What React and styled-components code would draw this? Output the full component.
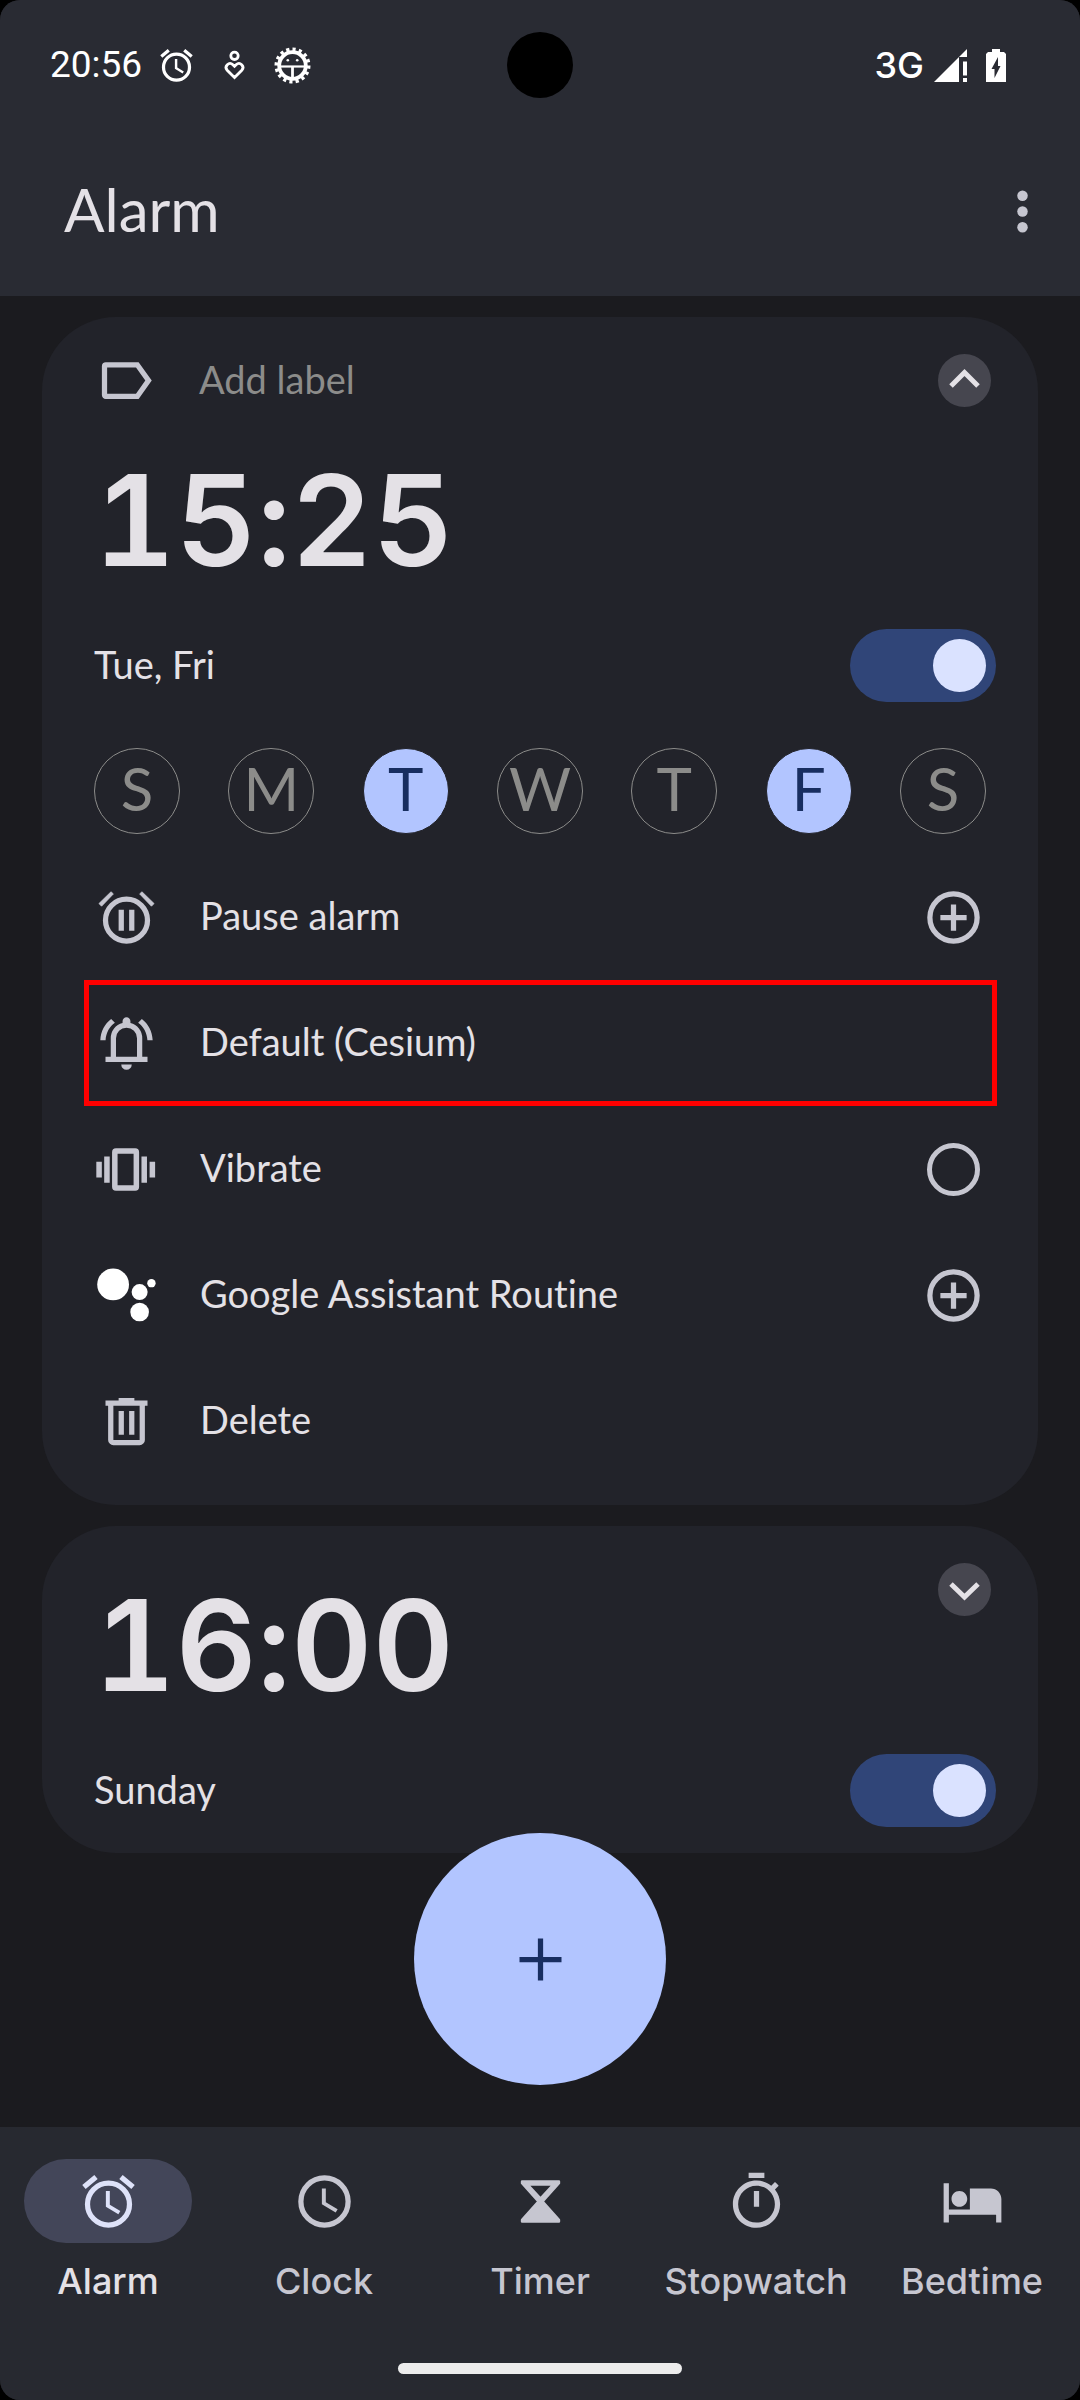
import React, { useState } from "react";
import styled, { createGlobalStyle } from "styled-components";

const color = {
  bar: "#292b33",
  nav: "#272930",
  page: "#1b1b1f",
  card: "#22232a",
  text: "#e4e1e6",
  muted: "#8c8c8a",
  icon: "#c6c6d0",
  primary: "#b2c5ff",
  onPrimary: "#182e60",
  track: "#304578",
  thumb: "#dae2ff",
  chip: "#46464f",
  pill: "#434659",
  pillIcon: "#dee2f9",
  highlight: "#ff0000",
};

const textFont = `Lato, "Open Sans", sans-serif`;
const uiFont = `Inter, Roboto, sans-serif`;

const GlobalStyle = createGlobalStyle`
  *, *::before { box-sizing: border-box; }
  body { margin: 0; background: #000; }
  button {
    margin: 0;
    padding: 0;
    border: 0;
    background: none;
    color: inherit;
    font: inherit;
    text-align: left;
    cursor: pointer;
  }
  svg { display: block; flex: none; }
`;

const Screen = styled.div`
  display: flex;
  flex-direction: column;
  min-height: 100vh;
  overflow: hidden;
  border-radius: 20px;
  background: ${color.page};
  color: ${color.text};
  font-family: ${textFont};
  font-size: 38px;
  line-height: 46px;
  font-variant-ligatures: none;
`;

const Header = styled.header`
  background: ${color.bar};
`;

const StatusBar = styled.div`
  display: grid;
  grid-template-columns: 1fr 66px 1fr;
  align-items: center;
  height: 130px;
  padding: 0 74px 0 50px;
  color: #fff;
`;

const StatusGroup = styled.div`
  display: flex;
  align-items: center;
  justify-content: ${(p) => (p.$end ? "flex-end" : "flex-start")};
  gap: ${(p) => p.$gap}px;
`;

const StatusTime = styled.span`
  font-family: Roboto, sans-serif;
  font-size: 37px;
`;

const Network = styled.span`
  font-family: ${uiFont};
  font-size: 36px;
  font-weight: 500;
`;

const Camera = styled.div`
  width: 66px;
  height: 66px;
  margin-left: 12px;
  border-radius: 50%;
  background: #000;
`;

const AppBar = styled.div`
  display: flex;
  align-items: center;
  justify-content: space-between;
  height: 166px;
  padding: 0 26px 4px 64px;
`;

const Title = styled.h1`
  margin: 0;
  padding-bottom: 4px;
  font-size: 60px;
  line-height: 70px;
  font-weight: 400;
`;

const MoreButton = styled.button`
  color: ${color.icon};
`;

const Body = styled.main`
  position: relative;
  flex: 1;
  display: flex;
  flex-direction: column;
  gap: 21px;
  padding: 21px 42px;
`;

const Card = styled.section`
  border-radius: 74px;
  background: ${color.card};
  padding-bottom: ${(p) => (p.$open ? 21 : 26)}px;
`;

const CardHead = styled.div`
  display: flex;
  align-items: flex-start;
  justify-content: space-between;
  padding: 37px 47px 0 52px;
`;

const AddLabel = styled.button`
  display: flex;
  align-items: center;
  gap: 42px;
  height: 53px;
  margin-bottom: 48px;
  color: ${color.icon};
  span {
    padding-bottom: 4px;
    color: ${color.muted};
  }
`;

const Expand = styled.button`
  width: 53px;
  height: 53px;
  border-radius: 50%;
  background: ${color.chip};
`;

const Time = styled.button`
  display: block;
  margin: ${(p) => (p.$inHead ? "17px 0 0" : "0 52px")};
  font-family: ${uiFont};
  font-size: 126px;
  line-height: 130px;
  font-weight: 600;
  font-variant-numeric: tabular-nums;
  font-feature-settings: "calt" 0;
`;

const Schedule = styled.label`
  display: flex;
  align-items: center;
  justify-content: space-between;
  margin: 44px 42px 0 52px;
  span { padding-bottom: 4px; }
`;

const Switch = styled.input.attrs({ type: "checkbox", role: "switch" })`
  appearance: none;
  display: flex;
  align-items: center;
  width: 146px;
  height: 73px;
  margin: 0;
  padding: 10px;
  border-radius: 37px;
  background: ${color.chip};
  &::before {
    content: "";
    width: 53px;
    height: 53px;
    border-radius: 50%;
    background: ${color.thumb};
  }
  &:checked { justify-content: flex-end; background: ${color.track}; }
`;

const Days = styled.div`
  display: flex;
  justify-content: space-between;
  margin: 46px 52px 20px;
`;

const Day = styled.button`
  width: 86px;
  height: 86px;
  padding-bottom: 6px;
  border-radius: 50%;
  border: 1px solid ${(p) => (p.$on ? color.card : color.muted)};
  background: ${(p) => (p.$on ? color.primary : "transparent")};
  color: ${(p) => (p.$on ? color.onPrimary : color.muted)};
  font-size: 60px;
  line-height: 78px;
  text-align: center;
`;

const Options = styled.div`
  padding: 0 41px 0 42px;
`;

const Option = styled.button`
  display: flex;
  align-items: center;
  gap: 42px;
  width: 100%;
  height: 126px;
  padding: 0 7px 0 6px;
  border: 5px solid ${(p) => (p.$marked ? color.highlight : "transparent")};
  color: ${color.icon};
  span {
    flex: 1;
    padding-bottom: 4px;
    color: ${color.text};
  }
`;

const Round = styled.input.attrs({ type: "checkbox" })`
  appearance: none;
  width: 53px;
  height: 53px;
  margin: 0 5px;
  border: 5px solid ${color.icon};
  border-radius: 50%;
  &:checked { background: ${color.primary}; }
`;

const Fab = styled.button`
  position: absolute;
  left: 50%;
  bottom: 42px;
  display: grid;
  place-items: center;
  width: 252px;
  height: 252px;
  margin-left: -126px;
  border-radius: 50%;
  background: ${color.primary};
  color: ${color.onPrimary};
`;

const Footer = styled.footer`
  padding: 32px 0 26px;
  background: ${color.nav};
`;

const Tabs = styled.nav`
  display: grid;
  grid-template-columns: repeat(5, 1fr);
`;

const Tab = styled.a`
  display: flex;
  flex-direction: column;
  align-items: center;
  gap: 15px;
  color: ${(p) => (p.$active ? color.text : color.icon)};
  font-family: ${uiFont};
  font-size: 36px;
  font-weight: 500;
  text-decoration: none;
`;

const Pill = styled.span`
  display: grid;
  place-items: center;
  width: 168px;
  height: 84px;
  border-radius: 42px;
  background: ${(p) => (p.$active ? color.pill : "transparent")};
  color: ${(p) => (p.$active ? color.pillIcon : color.icon)};
`;

const HomeBar = styled.div`
  width: 284px;
  height: 11px;
  margin: 59px auto 0;
  border-radius: 6px;
  background: #ececec;
`;

const Icon = ({ size = 63, children }) => (
  <svg width={size} height={size} viewBox="0 0 24 24" fill="currentColor" aria-hidden="true">
    {children}
  </svg>
);

const Ring = ({ cy = 12, r = 9 }) => (
  <circle cx="12" cy={cy} r={r} fill="none" stroke="currentColor" strokeWidth="2" />
);

const AlarmIcon = ({ size }) => (
  <Icon size={size}>
    <path d="M22 5.72l-4.6-3.86-1.29 1.53 4.6 3.86zM7.88 3.39L6.6 1.86 2 5.71l1.29 1.53z" />
    <Ring cy={13} r={8} />
    <path d="M12.5 8H11v6l4.75 2.85.75-1.23-4-2.37z" />
  </Icon>
);

const ClockIcon = () => (
  <Icon>
    <Ring />
    <path d="M12.5 7H11v6l5.25 3.15.75-1.23-4.5-2.67z" />
  </Icon>
);

const TimerIcon = () => (
  <Icon>
    <path
      fillRule="evenodd"
      stroke="currentColor"
      strokeLinejoin="round"
      d="M5 4.4h14v.6L12.7 12l6.3 7v.6H5V19l6.3-7L5 5zM7 5.500L12 10.900l5-5.400z"
    />
  </Icon>
);

const StopwatchIcon = () => (
  <Icon>
    <path d="M15 1H9v2h6V1zm-4 13h2V8h-2v6zm8.03-6.61l1.42-1.42c-.43-.51-.9-.99-1.41-1.41l-1.42 1.42C16.07 4.74 14.12 4 12 4c-4.97 0-9 4.03-9 9s4.02 9 9 9 9-4.03 9-9c0-2.12-.74-4.07-1.97-5.61zM12 20c-3.87 0-7-3.13-7-7s3.13-7 7-7 7 3.13 7 7-3.13 7-7 7z" />
  </Icon>
);

const BedIcon = () => (
  <Icon>
    <path d="M7 14c1.66 0 3-1.34 3-3S8.66 8 7 8s-3 1.34-3 3 1.34 3 3 3zm12-7h-8v8H3V5H1v15h2v-3h18v3h2v-9c0-2.21-1.79-4-4-4z" />
  </Icon>
);

const LabelIcon = () => (
  <Icon>
    <path
      fillRule="evenodd"
      d="M17 5H4.500C3.600 5 3 5.600 3 6.500v11c0 .9.6 1.500 1.500 1.500H17l5-7zM16 17H5V7h11l3.550 5z"
    />
  </Icon>
);

const PauseAlarmIcon = () => (
  <Icon>
    <path d="M6.1 2.2l.9.8-4.5 4.7-1-1zM17.9 2.2l-.9.8 4.5 4.7 1-1z" stroke="currentColor" strokeWidth=".3" />
    <Ring cy={13} r={8} />
    <path d="M9 9h2v8H9zM13 9h2v8h-2z" />
  </Icon>
);

const BellIcon = () => (
  <Icon>
    <path
      fillRule="evenodd"
      d="M4 19v-2h2v-7q0-2.075 1.25-3.687T10.5 4.2v-.7q0-.625.438-1.062T12 2t1.063.438T13.5 3.5v.7q2 .5 3.25 2.113T18 10v7h2v2zM8 17h8v-7q0-1.65-1.175-2.825T12 6T9.175 7.175T8 10z"
    />
    <path d="M10 20h4q0 .825-.587 1.413T12 22t-1.412-.587T10 20z" />
    <path d="M7.58 4.08L6.15 2.65C3.75 4.48 2.17 7.3 2.03 10.8h2c.15-2.95 1.51-5.27 3.55-6.72zM19.97 10.8h2c-.15-3.5-1.73-6.32-4.12-8.15l-1.42 1.43c2.02 1.45 3.39 3.77 3.54 6.72z" />
  </Icon>
);

const VibrateIcon = () => (
  <Icon>
    <path
      fillRule="evenodd"
      d="M.5 9h2.1v6H.5zM3.5 7h2.1v10H3.500zM17.700 7h2.1v10h-2.100zM20.800 9h2.1v6h-2.100zM8 3.900h7.300q1.500 0 1.500 1.500v13.200q0 1.500-1.500 1.500H8q-1.500 0-1.500-1.500V5.400q0-1.500 1.500-1.500zM8.600 6v12h6.100V6z"
    />
  </Icon>
);

const AssistantIcon = () => (
  <Icon>
    <g fill="#fff">
      <circle cx="6.9" cy="7.8" r="6.05" />
      <circle cx="17" cy="10.7" r="3.05" />
      <circle cx="21.5" cy="7.3" r="1.6" />
      <circle cx="17" cy="18.3" r="3.55" />
    </g>
  </Icon>
);

const TrashIcon = () => (
  <Icon>
    <path
      fillRule="evenodd"
      d="M7 21q-.825 0-1.412-.587T5 19V6H4V4h5V3h6v1h5v2h-1v13q0 .825-.587 1.413T17 21zM17 6H7v13h10zM9 17h2V8H9zM13 17h2V8h-2z"
    />
  </Icon>
);

const AddCircleIcon = () => (
  <Icon>
    <Ring />
    <path d="M11 7h2v4h4v2h-4v4h-2v-4H7v-2h4z" />
  </Icon>
);

const MoreIcon = () => (
  <Icon>
    <circle cx="12" cy="6" r="2" />
    <circle cx="12" cy="12" r="2" />
    <circle cx="12" cy="18" r="2" />
  </Icon>
);

const Chevron = ({ up }) => (
  <svg width="53" height="53" viewBox="0 0 53 53" fill="none" stroke={color.text} strokeWidth="5" aria-hidden="true">
    <path d={up ? "M13 32L26.500 18.500L40 32" : "M13 21L26.500 34L40 21"} />
  </svg>
);

const HeartPersonIcon = () => (
  <svg width="39" height="39" viewBox="0 0 39 39" fill="none" stroke="#fff" strokeWidth="2.8" aria-hidden="true">
    <circle cx="19.5" cy="9.8" r="3.7" />
    <path d="M19.5 31.500l-7.300-7.200c-3.400-3.800 1.800-9.200 5.700-5.600l1.600 1.600l1.600-1.600c3.900-3.600 9.100 1.800 5.700 5.600z" />
  </svg>
);

const BugIcon = () => (
  <svg width="39" height="39" viewBox="0 0 39 39" fill="none" stroke="#fff" aria-hidden="true">
    <circle cx="19.5" cy="19.5" r="16.2" strokeWidth="3.6" pathLength="32" strokeDasharray="1 1" />
    <circle cx="19.5" cy="19.5" r="13.3" strokeWidth="3.8" />
    <path d="M8 20.5h23" strokeWidth="2.2" />
    <path d="M19.5 20v12" strokeWidth="2.8" />
    <circle cx="14.8" cy="14.3" r="1.3" fill="#fff" stroke="none" />
    <circle cx="24.2" cy="14.3" r="1.3" fill="#fff" stroke="none" />
  </svg>
);

const SignalIcon = () => (
  <svg width="33" height="33" viewBox="0 0 33 33" fill="#fff" aria-hidden="true">
    <path d="M0 33L33 0v8h-8v25zM29 12.500h4v14h-4zM29 29h4v4h-4z" />
  </svg>
);

const BatteryIcon = () => (
  <svg width="20" height="33" viewBox="0 0 20 33" aria-hidden="true">
    <path fill="#fff" d="M6 0h8v3h4l2 2v28H0V5l2-2h4z" />
    <path fill={color.bar} d="M12 8v9h2.500L8.500 29v-9H5.500z" />
  </svg>
);

const weekdays = [
  ["Sunday", "S"],
  ["Monday", "M"],
  ["Tuesday", "T"],
  ["Wednesday", "W"],
  ["Thursday", "T"],
  ["Friday", "F"],
  ["Saturday", "S"],
];

const tabs = [
  ["Alarm", AlarmIcon],
  ["Clock", ClockIcon],
  ["Timer", TimerIcon],
  ["Stopwatch", StopwatchIcon],
  ["Bedtime", BedIcon],
];

export default function App() {
  const [days, setDays] = useState(["Tuesday", "Friday"]);
  const toggleDay = (day) =>
    setDays((list) => (list.includes(day) ? list.filter((d) => d !== day) : [...list, day]));

  return (
    <>
      <GlobalStyle />
      <Screen>
        <Header>
          <StatusBar>
            <StatusGroup $gap={15}>
              <StatusTime>20:56</StatusTime>
              <StatusGroup $gap={19}>
                <AlarmIcon size={39} />
                <HeartPersonIcon />
                <BugIcon />
              </StatusGroup>
            </StatusGroup>
            <Camera />
            <StatusGroup $gap={19} $end>
              <StatusGroup $gap={10}>
                <Network>3G</Network>
                <SignalIcon />
              </StatusGroup>
              <BatteryIcon />
            </StatusGroup>
          </StatusBar>
          <AppBar>
            <Title>Alarm</Title>
            <MoreButton type="button" aria-label="More options">
              <MoreIcon />
            </MoreButton>
          </AppBar>
        </Header>

        <Body>
          <Card $open>
            <CardHead>
              <AddLabel type="button">
                <LabelIcon />
                <span>Add label</span>
              </AddLabel>
              <Expand type="button" aria-label="Collapse alarm">
                <Chevron up />
              </Expand>
            </CardHead>
            <Time type="button">15:25</Time>
            <Schedule>
              <span>Tue, Fri</span>
              <Switch defaultChecked />
            </Schedule>
            <Days>
              {weekdays.map(([day, letter]) => (
                <Day
                  key={day}
                  type="button"
                  aria-label={day}
                  aria-pressed={days.includes(day)}
                  $on={days.includes(day)}
                  onClick={() => toggleDay(day)}
                >
                  {letter}
                </Day>
              ))}
            </Days>
            <Options>
              <Option type="button">
                <PauseAlarmIcon />
                <span>Pause alarm</span>
                <AddCircleIcon />
              </Option>
              <Option type="button" $marked>
                <BellIcon />
                <span>Default (Cesium)</span>
              </Option>
              <Option as="label">
                <VibrateIcon />
                <span>Vibrate</span>
                <Round />
              </Option>
              <Option type="button">
                <AssistantIcon />
                <span>Google Assistant Routine</span>
                <AddCircleIcon />
              </Option>
              <Option type="button">
                <TrashIcon />
                <span>Delete</span>
              </Option>
            </Options>
          </Card>

          <Card>
            <CardHead>
              <Time type="button" $inHead>16:00</Time>
              <Expand type="button" aria-label="Expand alarm">
                <Chevron />
              </Expand>
            </CardHead>
            <Schedule>
              <span>Sunday</span>
              <Switch defaultChecked />
            </Schedule>
          </Card>

          <Fab type="button" aria-label="Add alarm">
            <Icon>
              <path d="M11 4h2v7h7v2h-7v7h-2v-7H4v-2h7z" />
            </Icon>
          </Fab>
        </Body>

        <Footer>
          <Tabs aria-label="Clock sections">
            {tabs.map(([name, Glyph], i) => (
              <Tab key={name} href={`#${name.toLowerCase()}`} $active={i === 0}>
                <Pill $active={i === 0}>
                  <Glyph />
                </Pill>
                {name}
              </Tab>
            ))}
          </Tabs>
          <HomeBar />
        </Footer>
      </Screen>
    </>
  );
}
